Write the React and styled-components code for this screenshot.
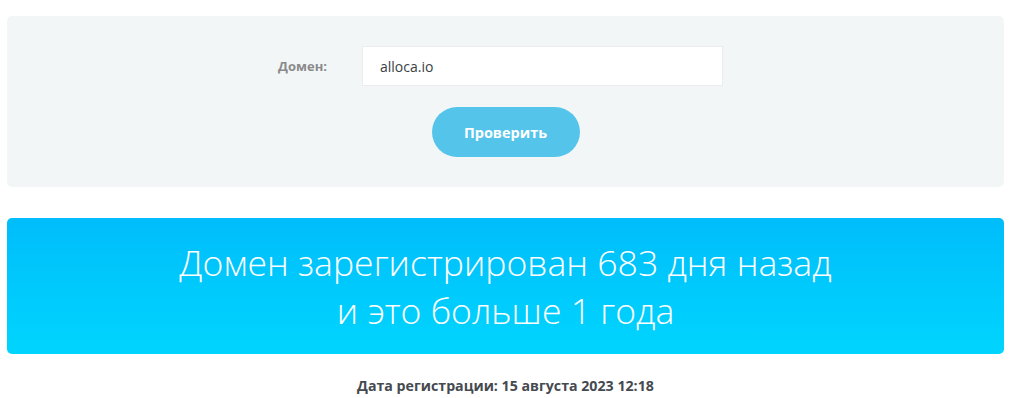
import React, { useState } from "react";
import styled, { createGlobalStyle } from "styled-components";

const GlobalStyle = createGlobalStyle`
  body {
    margin: 0;
    background: #ffffff;
    font-family: "Open Sans", "Liberation Sans", sans-serif;
  }
`;

const Page = styled.div`
  padding: 16px 9px 0 7px;
`;

const CheckPanel = styled.form`
  background-color: #f3f6f7;
  border-radius: 5px;
  height: 171px;
  box-sizing: border-box;
  padding-top: 30px;
  display: flex;
  flex-direction: column;
  align-items: center;
`;

const FieldRow = styled.div`
  display: flex;
  align-items: center;
  margin-right: 10px;
`;

const Label = styled.label`
  width: 84px;
  font-size: 13px;
  font-weight: 700;
  color: #8a8a8a;
`;

const Input = styled.input`
  width: 361px;
  height: 40px;
  box-sizing: border-box;
  border: 1px solid #e9edef;
  background: #ffffff;
  padding: 0 17px;
  font-family: inherit;
  font-size: 14px;
  color: #3a3f45;
  outline: none;
`;

const SubmitButton = styled.button`
  margin-top: 21px;
  width: 148px;
  height: 50px;
  border: none;
  border-radius: 25px;
  background-color: #55c4eb;
  color: #ffffff;
  font-family: inherit;
  font-size: 14.5px;
  font-weight: 700;
  cursor: pointer;
`;

const ResultBanner = styled.div`
  margin-top: 31px;
  height: 136px;
  border-radius: 5px;
  background: linear-gradient(180deg, #00bdfb 0%, #00d5fe 100%);
  color: #ffffff;
  display: flex;
  flex-direction: column;
  align-items: center;
  justify-content: center;
  text-align: center;
  font-size: 35.6px;
  font-weight: 300;
  line-height: 48px;
`;

const RegDate = styled.p`
  margin: 22px 0 0;
  text-align: center;
  font-size: 14.2px;
  font-weight: 700;
  color: #454a50;
`;

function App() {
  const [domain, setDomain] = useState("alloca.io");

  return (
    <Page>
      <GlobalStyle />
      <CheckPanel onSubmit={(e) => e.preventDefault()}>
        <FieldRow>
          <Label htmlFor="domain">Домен:</Label>
          <Input
            id="domain"
            value={domain}
            onChange={(e) => setDomain(e.target.value)}
          />
        </FieldRow>
        <SubmitButton type="submit">Проверить</SubmitButton>
      </CheckPanel>

      <ResultBanner>
        <div>Домен зарегистрирован 683 дня назад</div>
        <div>и это больше 1 года</div>
      </ResultBanner>

      <RegDate>Дата регистрации: 15 августа 2023 12:18</RegDate>
    </Page>
  );
}

export default App;
